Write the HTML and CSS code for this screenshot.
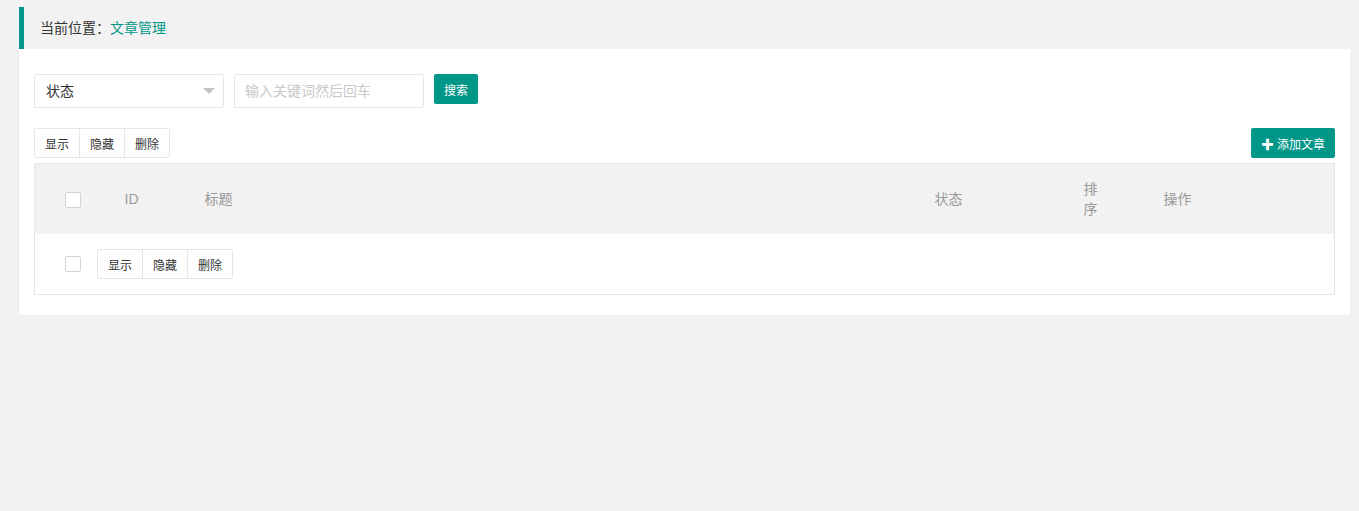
FILE: index.html
```html
<!DOCTYPE html>
<html lang="zh-CN">
<head>
    <meta charset="UTF-8">
    <title>文章管理</title>
    <link rel="stylesheet" href="styles.css">
</head>
<body>
    <div class="wrap">
        <div class="crumb">
            当前位置：<a href="#">文章管理</a>
        </div>

        <div class="card">
            <form class="search-row" onsubmit="return false">
                <div class="select">
                    <span>状态</span>
                    <i class="caret"></i>
                </div>
                <input type="text" class="kw" placeholder="输入关键词然后回车">
                <button class="btn">搜索</button>
            </form>

            <div class="toolbar">
                <div class="btn-group">
                    <button class="btn-plain">显示</button>
                    <button class="btn-plain">隐藏</button>
                    <button class="btn-plain">删除</button>
                </div>
                <button class="btn"><span class="plus">&#10010;</span>添加文章</button>
            </div>

            <table class="list">
                <colgroup>
                    <col style="width: 75px">
                    <col style="width: 80px">
                    <col style="width: 730px">
                    <col style="width: 149px">
                    <col style="width: 80px">
                    <col>
                </colgroup>
                <thead>
                    <tr>
                        <th class="chk-cell"><span class="chk"></span></th>
                        <th>ID</th>
                        <th>标题</th>
                        <th>状态</th>
                        <th><div class="narrow">排序</div></th>
                        <th>操作</th>
                    </tr>
                </thead>
                <tbody>
                    <tr>
                        <td colspan="6" class="chk-cell">
                            <div class="row-line">
                                <span class="chk"></span>
                                <div class="btn-group">
                                    <button class="btn-plain">显示</button>
                                    <button class="btn-plain">隐藏</button>
                                    <button class="btn-plain">删除</button>
                                </div>
                            </div>
                        </td>
                    </tr>
                </tbody>
            </table>
        </div>
    </div>
</body>
</html>
```

FILE: styles.css
```css
body {
    margin: 0;
    background-color: #f2f2f2;
    font-family: "Liberation Sans", "Noto Sans CJK SC", sans-serif;
    font-size: 14px;
    color: #333;
}
.wrap {
    margin: 7px 9px 0 19px;
}
.crumb {
    height: 42px;
    line-height: 42px;
    padding-left: 16px;
    border-left: 5px solid #009688;
    background-color: #f2f2f2;
}
.crumb a {
    color: #009688;
    text-decoration: none;
}
.card {
    background-color: white;
    padding: 25px 15px 20px;
    border-radius: 0 0 2px 2px;
    box-shadow: 0 1px 2px rgba(0,0,0,0.05);
}
.search-row {
    display: flex;
    align-items: flex-start;
    gap: 10px;
    margin: 0;
}
.select {
    position: relative;
    width: 190px;
    height: 34px;
    box-sizing: border-box;
    border: 1px solid #e6e6e6;
    border-radius: 2px;
    padding-left: 11px;
    line-height: 32px;
}
.caret {
    position: absolute;
    right: 8px;
    top: 13px;
    border-style: solid;
    border-width: 6px 6px 0;
    border-color: #c2c2c2 transparent transparent;
}
.kw {
    width: 190px;
    height: 34px;
    box-sizing: border-box;
    border: 1px solid #e6e6e6;
    border-radius: 2px;
    padding: 0 10px;
    font-family: inherit;
    font-size: 14px;
    outline: none;
}
.kw::placeholder {
    color: #c8c8c8;
}
.btn {
    height: 30px;
    padding: 0 10px;
    border: none;
    border-radius: 2px;
    background-color: #009688;
    color: white;
    font-family: inherit;
    font-size: 12px;
    cursor: pointer;
}
.plus {
    font-size: 13px;
    margin-right: 3px;
}
.toolbar {
    display: flex;
    justify-content: space-between;
    align-items: center;
    margin-top: 20px;
    margin-bottom: 5px;
}
.btn-group {
    display: flex;
}
.btn-plain {
    height: 30px;
    padding: 0 10px;
    border: 1px solid #e6e6e6;
    background-color: white;
    color: #333;
    font-family: inherit;
    font-size: 12px;
    cursor: pointer;
}
.btn-plain + .btn-plain {
    margin-left: -1px;
}
.btn-group .btn-plain:first-child {
    border-radius: 2px 0 0 2px;
}
.btn-group .btn-plain:last-child {
    border-radius: 0 2px 2px 0;
}
.list {
    width: 100%;
    border-collapse: collapse;
    table-layout: fixed;
    border: 1px solid #e6e6e6;
}
.list th {
    background-color: #f2f2f2;
    color: #999;
    font-weight: normal;
    text-align: left;
    line-height: 20px;
    padding: 15px 15px;
}
.list td {
    padding: 15px 15px;
    line-height: 20px;
}
.list .chk-cell {
    padding-left: 30px;
}
.chk {
    display: inline-block;
    width: 16px;
    height: 16px;
    box-sizing: border-box;
    border: 1px solid #d2d2d2;
    border-radius: 2px;
    background-color: white;
    vertical-align: middle;
}
.narrow {
    width: 16px;
}
.row-line {
    display: flex;
    align-items: center;
    gap: 16px;
}
```
